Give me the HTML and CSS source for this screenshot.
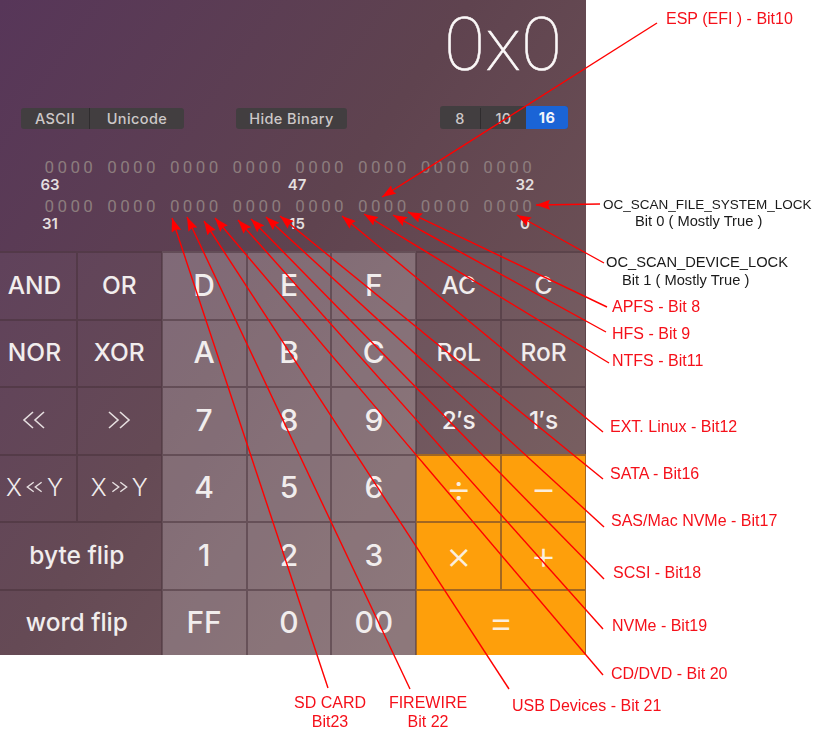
FILE: index.html
```html
<!DOCTYPE html>
<html lang="en">
<head>
<meta charset="utf-8">
<title>OC scan policy bits</title>
<link rel="stylesheet" href="styles.css">
</head>
<body>
<div class="page">
  <main class="calc">
    <section class="panel">
      <div class="display">0x0</div>
      <div class="controls">
        <div class="seg"><span class="s-ascii">ASCII</span><span class="s-uni">Unicode</span></div>
        <div class="seg hide">Hide Binary</div>
        <div class="seg base"><span class="s-8">8</span><span class="s-10">10</span><span class="s-16">16</span></div>
      </div>
      <div class="bits"><span>0000</span><span>0000</span><span>0000</span><span>0000</span><span>0000</span><span>0000</span><span>0000</span><span>0000</span></div>
      <div class="marks"><span class="m-a">63</span><span class="m-b">47</span><span class="m-c">32</span></div>
      <div class="bits second"><span>0000</span><span>0000</span><span>0000</span><span>0000</span><span>0000</span><span>0000</span><span>0000</span><span>0000</span></div>
      <div class="marks"><span class="m-a">31</span><span class="m-b">15</span><span class="m-c">0</span></div>
    </section>
    <section class="keys">
      <div class="key fn">AND</div><div class="key fn">OR</div>
      <div class="key num">D</div><div class="key num">E</div><div class="key num">F</div>
      <div class="key op">AC</div><div class="key op">C</div>

      <div class="key fn">NOR</div><div class="key fn">XOR</div>
      <div class="key num">A</div><div class="key num">B</div><div class="key num">C</div>
      <div class="key op">RoL</div><div class="key op">RoR</div>

      <div class="key fn" aria-label="«"><svg class="chev" viewBox="0 0 24 20"><path d="M11 2L2 10L11 18M22 2L13 10L22 18"/></svg></div>
      <div class="key fn" aria-label="»"><svg class="chev" viewBox="0 0 24 20"><path d="M2 2L11 10L2 18M13 2L22 10L13 18"/></svg></div>
      <div class="key num">7</div><div class="key num">8</div><div class="key num">9</div>
      <div class="key op">2′s</div><div class="key op">1′s</div>

      <div class="key fn thin">X<svg class="chev small" viewBox="0 0 24 20"><path d="M11 4L3 10L11 16M21 4L13 10L21 16"/></svg>Y</div>
      <div class="key fn thin">X<svg class="chev small" viewBox="0 0 24 20"><path d="M3 4L11 10L3 16M13 4L21 10L13 16"/></svg>Y</div>
      <div class="key num">4</div><div class="key num">5</div><div class="key num">6</div>
      <div class="key orange">÷</div><div class="key orange">−</div>

      <div class="key fn wide">byte flip</div>
      <div class="key num">1</div><div class="key num">2</div><div class="key num">3</div>
      <div class="key orange">×</div><div class="key orange">+</div>

      <div class="key fn wide">word flip</div>
      <div class="key num">FF</div><div class="key num">0</div><div class="key num">00</div>
      <div class="key orange wide">=</div>
    </section>
  </main>

  <svg class="notes" viewBox="0 0 816 750" width="816" height="750">
    <defs>
      <marker id="head" markerUnits="userSpaceOnUse" markerWidth="15" markerHeight="10" refX="14" refY="5" orient="auto">
        <path class="head" d="M0 0L14 5L0 10L2 5z"/>
      </marker>
    </defs>
    <g class="arrows">
      <line x1="657" y1="23" x2="382" y2="197"/>
      <line x1="600" y1="204" x2="536" y2="205"/>
      <line x1="604" y1="263" x2="517" y2="215"/>
      <line x1="607" y1="307" x2="408" y2="212"/>
      <line x1="606" y1="332" x2="393" y2="215"/>
      <line x1="609" y1="363" x2="364" y2="214"/>
      <line x1="603" y1="432" x2="342" y2="216"/>
      <line x1="603" y1="479" x2="280" y2="216"/>
      <line x1="604" y1="527" x2="266" y2="217"/>
      <line x1="604" y1="579" x2="251" y2="219"/>
      <line x1="603" y1="629" x2="238" y2="220"/>
      <line x1="603" y1="675" x2="215" y2="218"/>
      <line x1="509" y1="689" x2="204" y2="221"/>
      <line x1="410" y1="689" x2="187" y2="217"/>
      <line x1="328" y1="688" x2="172" y2="218"/>
    </g>
    <g class="red">
      <text x="666" y="24">ESP (EFI ) - Bit10</text>
      <text x="612" y="312">APFS - Bit 8</text>
      <text x="612" y="339">HFS - Bit 9</text>
      <text x="612" y="366">NTFS - Bit11</text>
      <text x="610" y="432">EXT. Linux - Bit12</text>
      <text x="610" y="479">SATA - Bit16</text>
      <text x="611" y="526">SAS/Mac NVMe - Bit17</text>
      <text x="613" y="578">SCSI - Bit18</text>
      <text x="612" y="631">NVMe - Bit19</text>
      <text x="611" y="679">CD/DVD - Bit 20</text>
      <text x="512" y="711">USB Devices - Bit 21</text>
      <text class="mid" x="330" y="708">SD CARD</text>
      <text class="mid" x="330" y="727">Bit23</text>
      <text class="mid" x="428" y="708">FIREWIRE</text>
      <text class="mid" x="428" y="727">Bit 22</text>
    </g>
    <g class="black">
      <text class="tight" x="603" y="209">OC_SCAN_FILE_SYSTEM_LOCK</text>
      <text x="635" y="226">Bit 0 ( Mostly True )</text>
      <text x="606" y="267">OC_SCAN_DEVICE_LOCK</text>
      <text x="622" y="285">Bit 1 ( Mostly True )</text>
    </g>
  </svg>
</div>
</body>
</html>
```
FILE: styles.css
```css
* { box-sizing: border-box; }
html, body { margin: 0; background: #fff; }
.page { position: relative; width: 816px; height: 750px; overflow: hidden; filter: blur(.35px); }

.calc {
  width: 586px;
  height: 655px;
  overflow: hidden;
  background: linear-gradient(125deg, #573659 0%, #5f434f 45%, #755a5a 100%);
  font-family: Inter, "Liberation Sans", sans-serif;
  color: #f1eded;
}

.panel { height: 251px; }
.display {
  height: 88px;
  padding-right: 24px;
  text-align: right;
  font-family: Roboto, sans-serif;
  font-weight: 100;
  font-size: 75px;
  line-height: 88px;
  color: #fbf8f8;
  -webkit-text-stroke: .5px #fbf8f8;
}
.controls {
  display: flex;
  align-items: flex-end;
  height: 23px;
  margin-top: 18px;
  padding: 0 18px 0 21px;
}
.seg {
  display: flex;
  align-items: center;
  justify-content: center;
  height: 21px;
  border-radius: 3px;
  background: #423e40;
  color: #cdc8c8;
  font-size: 14.5px;
  font-weight: 500;
  letter-spacing: .4px;
}
.seg span { display: flex; align-items: center; justify-content: center; height: 100%; }
.s-ascii { width: 69px; border-right: 1px solid #2f2c2e; }
.s-uni { width: 94px; }
.hide { width: 111px; margin-left: 52px; }
.base { width: 128px; margin-left: auto; overflow: hidden; height: 23px; align-items: flex-end; }
.s-8 { width: 41px; height: 21px !important; border-right: 1px solid #2f2c2e; }
.s-10 { width: 45px; height: 21px !important; }
.s-16 { width: 42px; background: #1a64d6; color: #f2f5fb; font-weight: 700; }

.bits {
  display: grid;
  grid-template-columns: repeat(8, 62.7px);
  margin-top: 29.5px;
  padding-left: 44.5px;
  height: 17px;
  font-family: Roboto, sans-serif;
  font-size: 17px;
  line-height: 17px;
  letter-spacing: 3.4px;
  color: #8c7c7d;
}
.bits.second { margin-top: 5px; }
.marks {
  display: flex;
  height: 17px;
  font-family: Inter, sans-serif;
  font-weight: 600;
  font-size: 15px;
  line-height: 17px;
  color: #e4dfdf;
}
.marks span { text-align: center; }
.m-a { width: 100px; margin-right: 147px; }
.m-b { width: 100px; margin-right: 168px; }
.m-c { width: 20px; }

.keys {
  display: grid;
  grid-template-columns: repeat(7, 1fr);
  grid-template-rows: repeat(5, 67.5px) 66.5px;
  width: 594px;
  height: 404px;
  margin-left: -8px;
}
.key {
  display: flex;
  align-items: center;
  justify-content: center;
  padding-bottom: 2px;
  border: solid rgba(70, 48, 56, .5);
  border-width: 2px 1px 0 1px;
  font-size: 24.5px;
  font-weight: 500;
}
.fn { background: rgba(255, 255, 255, .04); }
.num { background: rgba(255, 255, 255, .22); font-size: 30px; }
.op { background: rgba(255, 255, 255, .06); }
.orange { background: #fe9f0b; color: #fbeedd; font-size: 40px; font-weight: 300; }
.wide { grid-column: span 2; }
.thin { font-size: 24px; font-weight: 300; gap: 3px; }
.chev { width: 24px; height: 20px; fill: none; stroke: #e6dfe0; stroke-width: 1.6; }
.chev.small { width: 19px; height: 16px; stroke-width: 1.8; }

.notes { position: absolute; left: 0; top: 0; }
.arrows line { stroke: #f00; stroke-width: 1.4; marker-end: url(#head); }
.head { fill: #f00; }
.red text, .black text { font-family: "Liberation Sans", Arial, sans-serif; }
.red text { fill: #f5101a; font-size: 16px; }
.red .mid { text-anchor: middle; }
.black text { fill: #1a1a1a; font-size: 14.7px; }
.black .tight { font-size: 13.5px; }
```
